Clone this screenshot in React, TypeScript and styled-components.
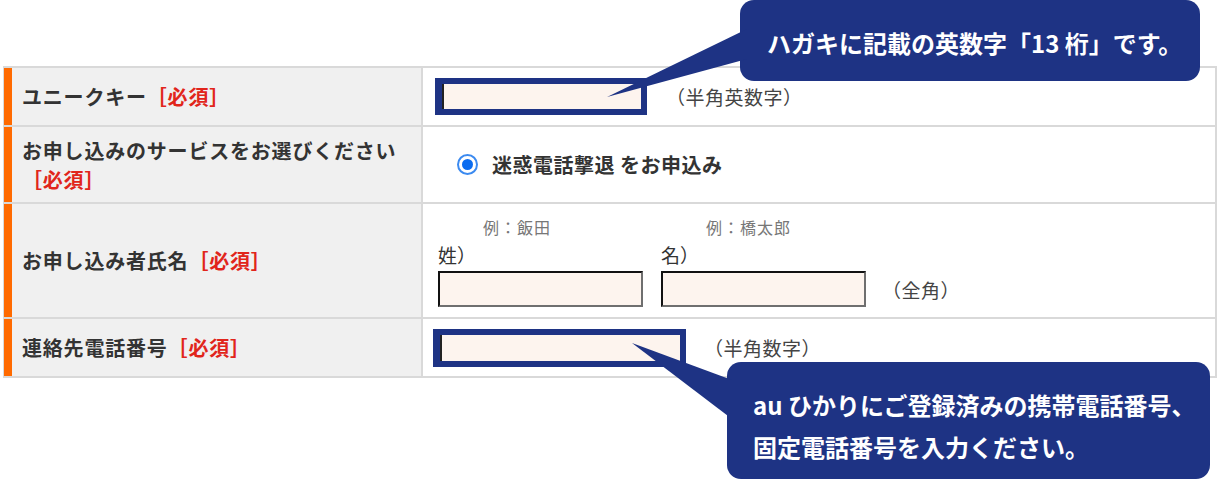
import React from 'react';
import styled, { createGlobalStyle } from 'styled-components';

const NAVY = '#1e3384';
const LINE = '#d9d9d9';

const GlobalStyle = createGlobalStyle`
    html, body {
        margin: 0;
        padding: 0;
        background: #fff;
    }
    body {
        font-family: "Noto Sans CJK JP", "Noto Sans", sans-serif;
        color: #333;
    }
`;

const Page = styled.div`
    position: relative;
    width: 1221px;
    height: 480px;
    padding: 66px 0 0 3px;
    box-sizing: border-box;
    overflow: hidden;
`;

const Table = styled.div`
    width: 1214px;
    box-sizing: border-box;
    border-top: 2px solid ${LINE};
    border-left: 1px solid ${LINE};
    border-right: 2px solid ${LINE};
`;

const Row = styled.div<{ $h: number }>`
    display: grid;
    grid-template-columns: 419px 1fr;
    height: ${p => p.$h + 2}px;
    box-sizing: border-box;
    border-bottom: 2px solid ${LINE};
`;

const Label = styled.div`
    display: flex;
    align-items: center;
    box-sizing: border-box;
    padding: 0 8px 0 10px;
    background: #f0f0f0;
    border-left: 8px solid #ff6a00;
    border-right: 2px solid ${LINE};
    font-size: 20px;
    font-weight: 700;
    letter-spacing: 0.8px;
    line-height: 29px;
    color: #333;
`;

const Required = styled.span`
    color: #e1251b;
`;

const Value = styled.div<{ $pad: number }>`
    display: flex;
    align-items: center;
    padding-left: ${p => p.$pad}px;
    background: #fff;
`;

const HighlightBox = styled.div<{ $w: number; $h: number }>`
    display: flex;
    width: ${p => p.$w}px;
    height: ${p => p.$h}px;
    box-sizing: border-box;
    border: 6px solid ${NAVY};
    border-left-width: 7px;
    background: #fdf4ee;
`;

const BareInput = styled.input`
    flex: 1;
    min-width: 0;
    width: 100%;
    margin: 0;
    padding: 0 4px;
    border: none;
    border-left: 2px solid #222;
    background: transparent;
    outline: none;
    font: inherit;
`;

const TextInput = styled.input`
    width: 205px;
    height: 36px;
    box-sizing: border-box;
    margin: 0;
    padding: 0 4px;
    border: 2px solid;
    border-color: #111 #6f6f6f #6f6f6f #111;
    background: #fdf4ee;
    outline: none;
    font: inherit;
`;

const Hint = styled.span<{ $gap: number; $drop?: number }>`
    margin-left: ${p => p.$gap}px;
    margin-top: ${p => p.$drop ?? 0}px;
    font-size: 19px;
    letter-spacing: 0.5px;
    color: #444;
    white-space: nowrap;
`;

const RadioOption = styled.label`
    display: flex;
    align-items: center;
    gap: 14px;
    font-size: 20px;
    font-weight: 700;
    letter-spacing: 0.5px;
    color: #333;
`;

const RadioDot = styled.span`
    display: flex;
    align-items: center;
    justify-content: center;
    width: 21px;
    height: 21px;
    box-sizing: border-box;
    border-radius: 50%;
    border: 2px solid #3b8af0;
    &::after {
        content: '';
        width: 11px;
        height: 11px;
        border-radius: 50%;
        background: #0b6cf0;
    }
`;

const NameRow = styled.div`
    display: flex;
    align-items: flex-end;
    gap: 18px;
    padding-bottom: 10px;
    align-self: stretch;
`;

const NameField = styled.div`
    display: flex;
    flex-direction: column;
    padding-top: 12px;
`;

const Example = styled.span`
    padding-left: 45px;
    font-size: 16px;
    line-height: 22px;
    letter-spacing: 1px;
    color: #777;
`;

const Caption = styled.span`
    font-size: 19px;
    line-height: 33px;
    color: #333;
`;

const Callout = styled.div<{ $x: number; $y: number; $w: number; $h: number; $pad: number }>`
    position: absolute;
    left: ${p => p.$x}px;
    top: ${p => p.$y}px;
    width: ${p => p.$w}px;
    height: ${p => p.$h}px;
    box-sizing: border-box;
    padding: 22px 0 0 ${p => p.$pad}px;
    border-radius: 14px;
    background: ${NAVY};
    color: #fff;
    font-size: 24px;
    font-weight: 700;
    line-height: 42px;
    white-space: nowrap;
`;

const Tail = styled.svg<{ $x: number; $y: number }>`
    position: absolute;
    left: ${p => p.$x}px;
    top: ${p => p.$y}px;
    overflow: visible;
`;

export default function App() {
    return (
        <Page>
            <GlobalStyle />
            <Table>
                <Row $h={57}>
                    <Label>ユニークキー<Required>［必須］</Required></Label>
                    <Value $pad={12}>
                        <HighlightBox $w={212} $h={37}>
                            <BareInput type="text" />
                        </HighlightBox>
                        <Hint $gap={19}>（半角英数字）</Hint>
                    </Value>
                </Row>
                <Row $h={75}>
                    <Label>
                        <span>お申し込みのサービスをお選びください<Required>［必須］</Required></span>
                    </Label>
                    <Value $pad={34}>
                        <RadioOption>
                            <RadioDot />
                            迷惑電話撃退 をお申込み
                        </RadioOption>
                    </Value>
                </Row>
                <Row $h={113}>
                    <Label>お申し込み者氏名<Required>［必須］</Required></Label>
                    <Value $pad={15}>
                        <NameRow>
                            <NameField>
                                <Example>例：飯田</Example>
                                <Caption>姓）</Caption>
                                <TextInput type="text" />
                            </NameField>
                            <NameField>
                                <Example>例：橋太郎</Example>
                                <Caption>名）</Caption>
                                <TextInput type="text" />
                            </NameField>
                        </NameRow>
                        <Hint $gap={16} $drop={58}>（全角）</Hint>
                    </Value>
                </Row>
                <Row $h={57}>
                    <Label>連絡先電話番号<Required>［必須］</Required></Label>
                    <Value $pad={10}>
                        <HighlightBox $w={253} $h={38}>
                            <BareInput type="text" />
                        </HighlightBox>
                        <Hint $gap={18}>（半角数字）</Hint>
                    </Value>
                </Row>
            </Table>

            <Callout $x={740} $y={0} $w={460} $h={81} $pad={27}>
                <Tail $x={-133} $y={29} width={140} height={68}>
                    <polygon points="140,0 140,30 0,68" fill={NAVY} />
                </Tail>
                ハガキに記載の英数字「13 桁」です。
            </Callout>

            <Callout $x={727} $y={362} $w={483} $h={117} $pad={26}>
                <Tail $x={-95} $y={-19} width={100} height={76}>
                    <polygon points="0,0 100,37 100,76" fill={NAVY} />
                </Tail>
                au ひかりにご登録済みの携帯電話番号、<br />
                固定電話番号を入力ください。
            </Callout>
        </Page>
    );
}
